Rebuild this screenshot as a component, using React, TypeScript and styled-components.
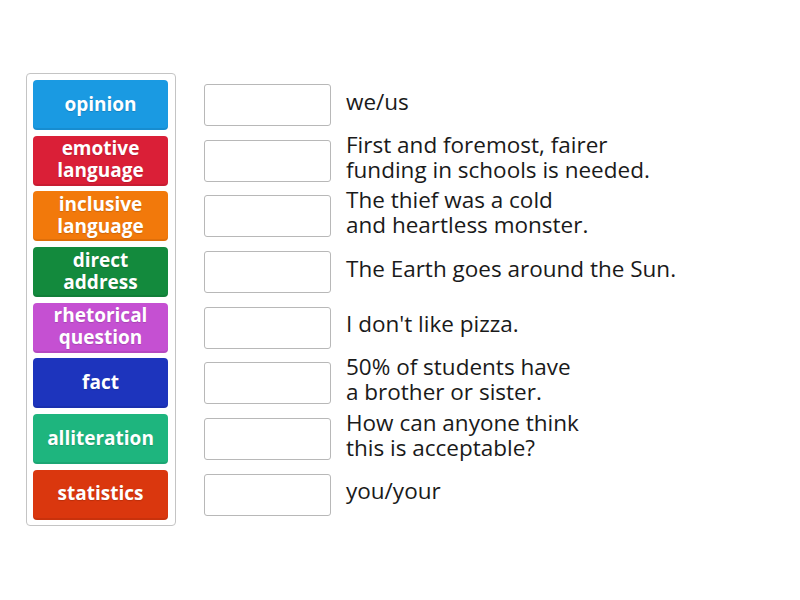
import React from "react";
import styled, { createGlobalStyle } from "styled-components";

const GlobalStyle = createGlobalStyle`
  html, body {
    margin: 0;
    padding: 0;
    background: #ffffff;
  }
  body {
    font-family: "Open Sans", "Liberation Sans", sans-serif;
    color: #222;
  }
`;

const Page = styled.div`
  display: flex;
  align-items: flex-start;
  gap: 28px;
  padding: 73px 0 0 26px;
  width: 800px;
  height: 600px;
  box-sizing: border-box;
`;

const TilePanel = styled.div`
  display: flex;
  flex-direction: column;
  gap: 5.7px;
  width: 150px;
  box-sizing: border-box;
  padding: 6px 7px 5px 6px;
  border: 1px solid #c4c4c4;
  border-radius: 4px;
  background: #fff;
`;

const Tile = styled.div<{ $bg: string }>`
  height: 50px;
  border-radius: 4px;
  background: ${(p) => p.$bg};
  box-shadow: inset 0 -2px 0 rgba(0, 0, 0, 0.08);
  display: flex;
  align-items: center;
  justify-content: center;
  text-align: center;
  color: #fff;
  font-weight: 700;
  font-size: 19px;
  line-height: 22px;
  text-shadow: 0 1px 1px rgba(0, 0, 0, 0.15);
  padding-bottom: 3px;
  box-sizing: border-box;
  white-space: pre-line;
`;

const Rows = styled.div`
  display: flex;
  flex-direction: column;
  gap: 5.7px;
  padding-top: 7px;
`;

const Row = styled.div`
  display: flex;
  align-items: center;
  height: 50px;
  gap: 15px;
`;

const DropBox = styled.div`
  width: 127px;
  height: 42px;
  box-sizing: border-box;
  border: 1px solid #b8b8b8;
  border-radius: 3px;
  background: #fff;
  flex-shrink: 0;
`;

const Clue = styled.div`
  font-size: 22.5px;
  line-height: 25px;
  color: #1a1a1a;
  white-space: pre-line;
  margin-top: -8px;
`;

const tiles = [
  { label: "opinion", bg: "#1a9ae2" },
  { label: "emotive\nlanguage", bg: "#da1f37" },
  { label: "inclusive\nlanguage", bg: "#f2790b" },
  { label: "direct\naddress", bg: "#138a3d" },
  { label: "rhetorical\nquestion", bg: "#c550d2" },
  { label: "fact", bg: "#1d34bd" },
  { label: "alliteration", bg: "#1eb57e" },
  { label: "statistics", bg: "#da370e" },
];

const clues = [
  "we/us",
  "First and foremost, fairer\nfunding in schools is needed.",
  "The thief was a cold\nand heartless monster.",
  "The Earth goes around the Sun.",
  "I don't like pizza.",
  "50% of students have\na brother or sister.",
  "How can anyone think\nthis is acceptable?",
  "you/your",
];

const App: React.FC = () => (
  <>
    <GlobalStyle />
    <Page>
      <TilePanel>
        {tiles.map((t) => (
          <Tile key={t.label} $bg={t.bg}>
            {t.label}
          </Tile>
        ))}
      </TilePanel>
      <Rows>
        {clues.map((c) => (
          <Row key={c}>
            <DropBox />
            <Clue>{c}</Clue>
          </Row>
        ))}
      </Rows>
    </Page>
  </>
);

export default App;
